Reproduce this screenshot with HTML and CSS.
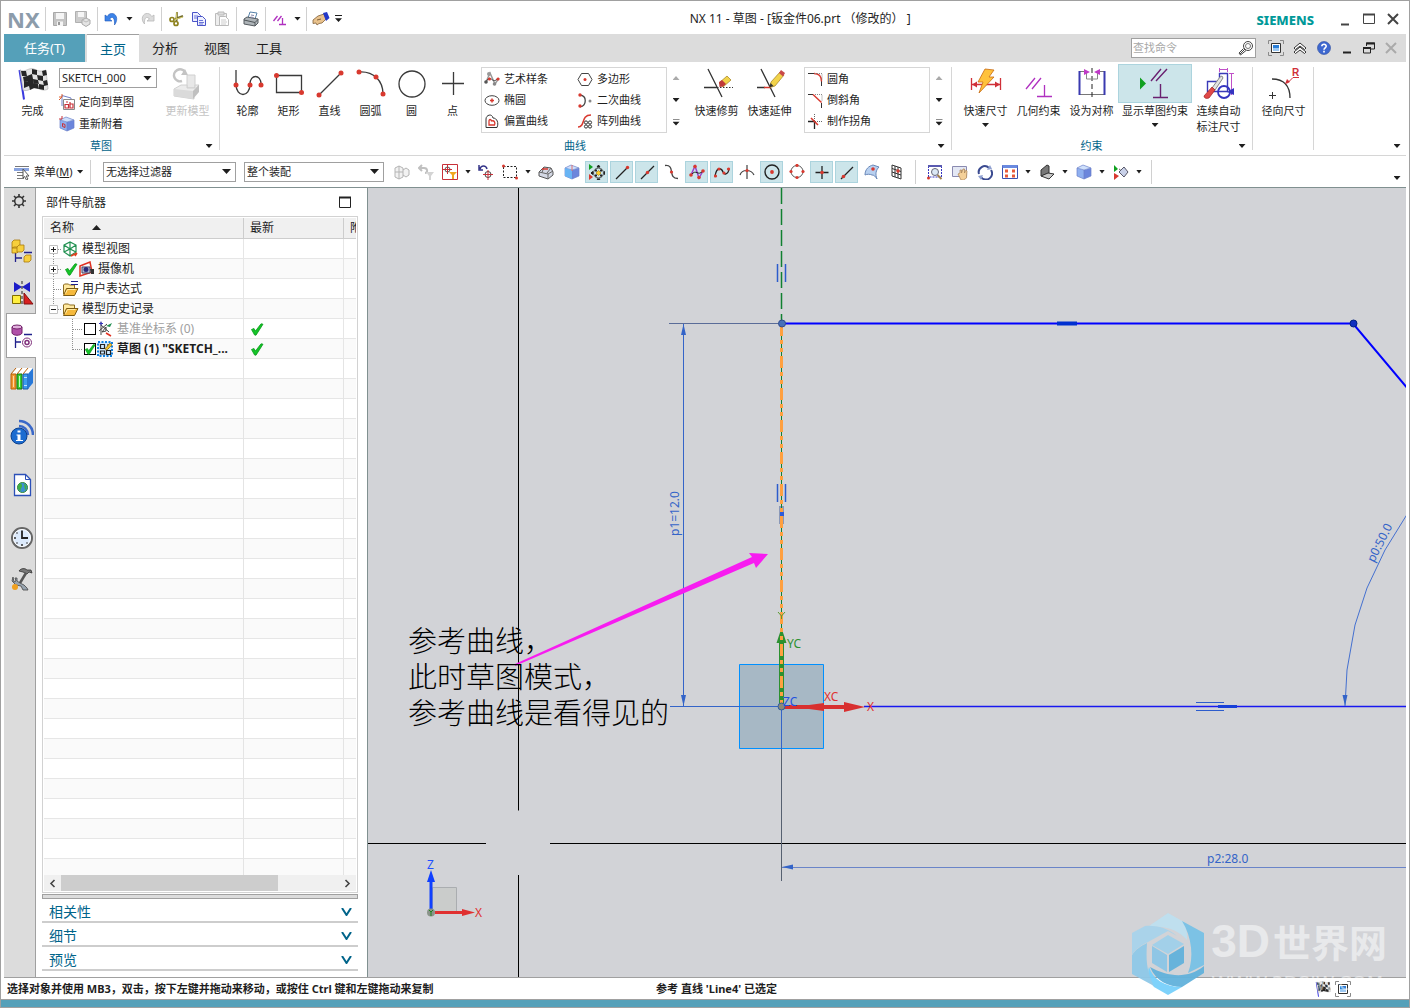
FILE: index.html
```html
<!DOCTYPE html>
<html lang="zh-CN">
<head>
<meta charset="utf-8">
<title>NX 11 - 草图 - [钣金件06.prt （修改的） ]</title>
<link rel="stylesheet" href="styles.css">
</head>
<body>
<svg class="defs" aria-hidden="true">
  <symbol id="tick" viewBox="0 0 14 14"><path d="M1.500 7.500 4 6.500l1.500 2.500L11 1.800l2 .4L6 13.200 4.600 13z" fill="#14c428" stroke="#0b9a1c" stroke-width=".8"/></symbol>
  <symbol id="flag" viewBox="0 0 32 32"><path d="M2.500 2 7 31.500" stroke="#3a3ae0" stroke-width="2"/><path d="M3 2c5 3 9-3 14-1 4 2 7 3 12 1l2 19c-5 3-9-1-13-1-5 0-7 4-12 2z" fill="#e4e4e4" stroke="#aaa" stroke-width=".6"/><path d="M4 3h5l1 5H5zM15 1l5 1v5l-5-1zM25 3l4-1 1 5-4 1zM10 8l5-2 1 5-5 2zM20 7l6 1v5l-5-1zM6 9l4-1 1 5-4 1zM16 11l5 1 1 4-5-1zM26 13l4-1 1 5-4 1zM11 13l5-2 1 5-5 2zM7 14l5-1v5l-5 2zM17 15l4 1 1 5-5-1zM22 16l5 1v5l-5-1zM12 18l5-2v4l-4 2z" fill="#262626"/></symbol>
  <symbol id="fit" viewBox="0 0 16 16"><path d="M.5 4V.5H4M12 .5h3.500V4M15.500 12v3.500H12M4 15.500H.5V12" fill="none" stroke="#8a8a8a"/><path d="M3.500 3.500h9v9h-9z" fill="#fff" stroke="#333"/><path d="M5 5h6v6H5z" fill="#2b7fd8"/><path d="M5 8h6v3H5z" fill="#9cc8f2"/></symbol>
  <symbol id="folder" viewBox="0 0 16 16"><path d="M1 13V4l1-1h4l1 1h5v3" fill="#ffe9a0" stroke="#8a6a20"/><path d="M1 14.500 4 7.500h11.500L12 14.500z" fill="#f5b93c" stroke="#7b5a12"/><path d="M3 12.500 5 8.500h8" fill="none" stroke="#ffe9a0"/></symbol>
  <symbol id="cube" viewBox="0 0 16 16"><path d="m1 4 7 2v9l-7-3z" fill="#8fb0f0"/><path d="m8 6 7-2v8l-7 3z" fill="#6c86dc"/><path d="m1 4 6-3 8 3-7 2z" fill="#cfe0fb"/><path d="m1 4 6-3 8 3v8l-7 3-7-3zM1 4l7 2 7-2M8 6v9" fill="none" stroke="#6a7fc8" stroke-width=".7"/></symbol>
</svg>

<header class="titlebar">
  <div class="quick">
    <span class="nx">NX</span><i class="sep"></i>
    <button class="q" aria-label="保存"><svg width="16" height="16"><path d="M1.500 1.500h13v13h-13z" fill="#c4c4c4" stroke="#a8a8a8"/><path d="M4 2h8v6H4zM5 10.500h6V15H5z" fill="#f5f5f5"/><path d="M6 11h2v3H6z" fill="#999"/></svg></button>
    <button class="q" aria-label="另存为"><svg width="16" height="16"><path d="M.5.500h11v11H.5z" fill="#ccc" stroke="#b0b0b0"/><path d="M3 1h6v5H3z" fill="#f5f5f5"/><path d="m7 9 4-2 4 2v4l-4 2.500L7 13z" fill="#e4e4e4" stroke="#aaa"/><path d="m7 9 4 2 4-2" fill="none" stroke="#bbb"/></svg></button>
    <i class="sep"></i>
    <button class="q" aria-label="撤消"><svg width="16" height="16"><path d="M1 4v6h7L5.500 8C8 5 11 6 10.500 14 15 8 12 2 7.500 2.500 5.500 2.500 4 4 3.200 5.500z" fill="#3c83e8" stroke="#1d55b8" stroke-width=".6"/></svg></button>
    <button class="q drop" aria-label="撤消列表"><i class="caret"></i></button>
    <button class="q" aria-label="重做"><svg width="16" height="16"><path d="M15 4v6H8l2.500-2C8 5 5 6 5.500 13 1 8 4 2 8.500 2.500c2 0 3.500 1.500 4.300 3z" fill="#dcdcdc" stroke="#b8b8b8" stroke-width=".8"/></svg></button>
    <i class="sep"></i>
    <button class="q" aria-label="剪切"><svg width="16" height="16"><path d="M8.500 10 9 1M7 8l8-3" stroke="#6f6a30" stroke-width="2"/><path d="m8 9 1-8M7 8.500 15 6" stroke="#d8cf70"/><circle cx="4" cy="8.500" r="2" fill="none" stroke="#8f8320" stroke-width="1.700"/><circle cx="8" cy="12.500" r="2" fill="none" stroke="#8f8320" stroke-width="1.700"/></svg></button>
    <button class="q" aria-label="复制"><svg width="16" height="16"><g fill="#eef0ff" stroke="#4a55c8"><path d="M1.500 1.500h5l3 3v6h-8z"/><path d="M6.500 5.500h5l3 3v6h-8z"/></g><path d="M3 5h4M3 7h3M8 9.500h4M8 11.500h5M8 13h4" stroke="#6c76d8"/></svg></button>
    <button class="q" aria-label="粘贴"><svg width="16" height="16"><path d="M1.500 2.500h11v12h-11z" fill="#eee" stroke="#bbb"/><path d="M4 1h6v3H4z" fill="#ddd" stroke="#bbb"/><path d="M5.500 5.500h6l3 3v6h-9z" fill="#fff" stroke="#bbb"/><path d="M7 9h5M7 11h6M7 13h5" stroke="#ccc"/></svg></button>
    <i class="sep"></i>
    <button class="q" aria-label="打印"><svg width="16" height="16"><path d="m5 7 2-6 7 1-2 6z" fill="#fff" stroke="#5580a8"/><path d="m1 8 3-2 11 2v4l-3 3-11-2z" fill="#aeb4b8" stroke="#555b60"/><path d="m1 9 11 2.500V15M12 11.500l3-3" fill="none" stroke="#50565a"/><path d="m8 4 3 .5M7.500 6l3 .5" stroke="#88a"/></svg></button>
    <i class="sep"></i>
    <button class="q" aria-label="几何约束"><svg width="16" height="16"><path d="m1.500 10 4-5M5.500 10l4-5M7 13.500h7M10.500 13.500V7" stroke="#b030c0" stroke-width="1.300" fill="none"/></svg></button>
    <button class="q drop" aria-label="约束列表"><i class="caret"></i></button>
    <i class="sep"></i>
    <button class="q" aria-label="触摸模式"><svg width="18" height="16"><path d="m1 9 5-4 6-2 2 5-4 4-3 .5-2 1.500-1-2-3 .5z" fill="#e9c28c" stroke="#80603a" stroke-width=".8"/><path d="m11 2 4-1 2.500 6-3.500 3z" fill="#2438c8"/><path d="m5 9 4-1" stroke="#80603a"/></svg></button>
    <button class="q drop" aria-label="更多"><i class="caret barred"></i></button>
  </div>
  <h1 class="doc">NX 11 - 草图 - [钣金件06.prt （修改的） ]</h1>
  <span class="brand">SIEMENS</span>
  <div class="win">
    <button aria-label="最小化"><svg width="14" height="14"><path d="M3 12.500h8" stroke="#444" stroke-width="2"/></svg></button>
    <button aria-label="最大化"><svg width="14" height="14"><path d="M1.500 2.500h11v9h-11z" fill="none" stroke="#444"/><path d="M1 2.500h12" stroke="#444" stroke-width="2"/></svg></button>
    <button aria-label="关闭"><svg width="14" height="14"><path d="m2 2 10 10M12 2 2 12" stroke="#444" stroke-width="2"/></svg></button>
  </div>
</header>

<nav class="tabs">
  <button class="tab file">任务(T)</button>
  <button class="tab on">主页</button>
  <button class="tab">分析</button>
  <button class="tab">视图</button>
  <button class="tab">工具</button>
  <label class="search"><input type="text" placeholder="查找命令" aria-label="查找命令"><svg width="16" height="16"><circle cx="10" cy="6" r="4.500" fill="#fff" stroke="#444"/><circle cx="10" cy="6" r="2.500" fill="none" stroke="#777"/><path d="m7 9-5 5M5.500 8.500 1 13l1.500 2L8 10.500" stroke="#444" fill="none"/></svg></label>
  <div class="tabtools">
    <button aria-label="全屏"><svg width="16" height="16"><use href="#fit"/></svg></button>
    <button aria-label="最小化功能区"><svg width="16" height="16"><path d="m2 8 6-5 6 5-1.500 1.500L8 6 3.500 9.500zM2 12l6-5 6 5-1.500 1.500L8 10l-4.500 3.500z" fill="#fff" stroke="#333"/></svg></button>
    <button aria-label="帮助"><svg width="14" height="14"><circle cx="7" cy="7" r="6.500" fill="#3e68d0" stroke="#2a4ba0" stroke-width=".6"/><path d="M4.800 5.300C5 2.600 9.300 2.700 9.200 5.200 9.100 6.800 7 6.800 7 8.700M7 9.800v1.600" fill="none" stroke="#fff" stroke-width="1.600"/></svg></button>
  </div>
  <div class="win small">
    <button aria-label="最小化文档"><svg width="14" height="14"><path d="M3 11.500h8" stroke="#222" stroke-width="2"/></svg></button>
    <button aria-label="还原文档"><svg width="14" height="14"><path d="M4.500 5V2h8v6H9M4 2.500h9M1.500 12V7h7v5z" fill="none" stroke="#222"/><path d="M1 7h8M4 2.500h9" stroke="#222" stroke-width="2"/></svg></button>
    <button aria-label="关闭文档"><svg width="14" height="14"><path d="m2 2 10 10M12 2 2 12" stroke="#aaa" stroke-width="2"/></svg></button>
  </div>
</nav>

<section class="ribbon">
  <div class="group g1">
    <div class="items">
      <button class="big"><span class="ic"><svg width="32" height="32"><use href="#flag"/></svg></span>完成</button>
      <div class="stack">
        <span class="pick"><select aria-label="草图名"><option>SKETCH_000</option></select><i class="caret wide"></i></span>
        <button class="line"><svg width="16" height="16"><path d="M3 1.500 12 4v2M3 1.500V12" fill="none" stroke="#7080c8"/><path d="M4.500 5.500h11v10h-11z" fill="#fff" stroke="#888"/><path d="M6 10.500h3.500V14H6zM11 8v6h3v-4h-3M7 8h2" fill="none" stroke="#c83038" stroke-width="1.200"/><path d="M0 3h3V0M0 6l3-3" stroke="#e06030" fill="none"/></svg>定向到草图</button>
        <button class="line"><svg width="16" height="16"><use href="#cube"/><path d="M3.500 7.500 6 8.500v3L3.500 10.500zM0 3h3V0" fill="none" stroke="#c83038"/></svg>重新附着</button>
      </div>
      <button class="big" disabled><span class="ic"><svg width="32" height="32"><path d="M10 13A6 6 0 1 1 13 4" fill="none" stroke="#c4c4c4" stroke-width="2.500"/><path d="m13 1 3 6-7 0z" fill="#c4c4c4"/><path d="M15 7h8v13h-8z" fill="#e8e8e8" stroke="#d0d0d0"/><path d="m2 21 7-4h6v3h8v-3h4l-5 6v8L2 28z" fill="#ececec" stroke="#d0d0d0"/><path d="m21 23 6-6v7l-6 7z" fill="#c0c0c0"/><path d="m2 21 19 2v8L2 28z" fill="#dadada"/></svg></span>更新模型</button>
    </div>
    <footer><span>草图</span><button class="more" aria-label="草图选项"><i class="caret"></i></button></footer>
  </div>

  <div class="group g2">
    <div class="items">
      <button class="tool"><span class="ic"><svg width="32" height="32"><path d="M4 2v14c0 14 14 14 14 0 0-10 11-10 11 0v2" fill="none" stroke="#3a3a3a" stroke-width="1.300"/><g fill="#d8392f"><circle cx="4" cy="17" r="2.500"/><circle cx="18" cy="17" r="2.500"/><circle cx="29" cy="17" r="2.500"/></g></svg></span>轮廓</button>
      <button class="tool"><span class="ic"><svg width="32" height="32"><path d="M3.500 7.500h25v17h-25z" fill="none" stroke="#3a3a3a" stroke-width="1.300"/><g fill="#d8392f"><circle cx="3.500" cy="7.500" r="2.500"/><circle cx="28.500" cy="24.500" r="2.500"/></g></svg></span>矩形</button>
      <button class="tool"><span class="ic"><svg width="32" height="32"><path d="M5 27 27 5" stroke="#3a3a3a" stroke-width="1.300"/><g fill="#d8392f"><circle cx="5" cy="27" r="2.500"/><circle cx="27" cy="5" r="2.500"/></g></svg></span>直线</button>
      <button class="tool"><span class="ic"><svg width="32" height="32"><path d="M4 4c15-1 24 9 24 22" fill="none" stroke="#3a3a3a" stroke-width="1.300"/><g fill="#d8392f"><circle cx="4" cy="4" r="2.500"/><circle cx="21" cy="9" r="2.500"/><circle cx="28" cy="26" r="2.500"/></g></svg></span>圆弧</button>
      <button class="tool"><span class="ic"><svg width="32" height="32"><circle cx="16" cy="16" r="13" fill="none" stroke="#3a3a3a" stroke-width="1.300"/></svg></span>圆</button>
      <button class="tool"><span class="ic"><svg width="32" height="32"><path d="M16.500 4v23M5 15.500h22" stroke="#3a3a3a" stroke-width="1.300"/></svg></span>点</button>
      <div class="gallery two">
        <button class="line"><svg width="16" height="16"><path d="M2 11 6 2l5 11 4-6" fill="none" stroke="#999" stroke-width="1.500"/><path d="M2 11c5-10 6 4 12-4" fill="none" stroke="#444"/><circle cx="5" cy="3" r="2" fill="#999"/><circle cx="2" cy="11" r="1.800" fill="#555"/><circle cx="10.500" cy="13" r="1.800" fill="#888"/><circle cx="5.500" cy="8" r="1.600" fill="#d8392f"/><circle cx="14" cy="8" r="1.600" fill="#d8392f"/></svg>艺术样条</button>
        <button class="line"><svg width="16" height="16"><path d="m4.500 2.500h7l3.500 6-3.500 6h-7L1 8.500z" fill="none" stroke="#444"/><circle cx="8" cy="8.500" r="1.500" fill="#d8392f"/></svg>多边形</button>
        <button class="line"><svg width="16" height="16"><ellipse cx="8" cy="8.500" rx="7" ry="4.800" fill="none" stroke="#444"/><path d="M8 6.500v4M6 8.500h4" stroke="#d8392f" stroke-width="1.500"/></svg>椭圆</button>
        <button class="line"><svg width="16" height="16"><path d="M3 3c7 1 7 10 0 12" fill="none" stroke="#444" stroke-width="1.300"/><g fill="#d8392f"><circle cx="3" cy="3" r="1.700"/><circle cx="3" cy="14" r="1.700"/></g><circle cx="13" cy="9" r="1.500" fill="#888"/></svg>二次曲线</button>
        <button class="line"><svg width="16" height="16"><path d="M2 14.500V6c0-4 6-6 7-1 4 0 6 5 4 9.500z" fill="none" stroke="#333"/><path d="M5 12V8c0-2 2-2 2.500 0 3-1 4 2 3 4z" fill="none" stroke="#d8392f" stroke-width="1.300"/></svg>偏置曲线</button>
        <button class="line"><svg width="16" height="16"><path d="M1 14c8 0 2-12 13-12" fill="none" stroke="#d8392f" stroke-width="1.500"/><g fill="#fff" stroke="#333"><circle cx="9" cy="9.500" r="1.600"/><circle cx="13" cy="9.500" r="1.600"/><circle cx="9" cy="13.500" r="1.600"/><circle cx="13" cy="13.500" r="1.600"/></g></svg>阵列曲线</button>
      </div>
      <div class="scroll"><button aria-label="上一行"><i class="caret up"></i></button><button aria-label="下一行"><i class="caret"></i></button><button aria-label="全部曲线"><i class="caret barred"></i></button></div>
      <button class="big after"><span class="ic"><svg width="32" height="32"><path d="m7 1 14 28M3 19.500h13" stroke="#333" stroke-width="1.300"/><path d="M16 19.500h16" stroke="#333" stroke-dasharray="1.500 1.500"/><path d="m18 15 8-7 4 4-8 7z" fill="#f2d34a" stroke="#a08020" stroke-width=".7"/><path d="m18 14 3-2 4 4-3 2.500-3.500.5z" fill="#c03a3a"/></svg></span>快速修剪</button>
      <button class="big"><span class="ic"><svg width="32" height="32"><path d="m7 1 14 28M3 19.500h8" stroke="#333" stroke-width="1.300"/><path d="M10 19.500h7" stroke="#d8392f" stroke-width="1.500"/><path d="m17 14 9-10 4 3-9 11-5 1.500z" fill="#f2d34a" stroke="#a08020" stroke-width=".7"/><path d="m25 5 2-3 4 3-2 3.500z" fill="#c84a4a"/><path d="m16.500 15-1 4.500 4-1.500z" fill="#333"/></svg></span>快速延伸</button>
      <div class="gallery one">
        <button class="line"><svg width="16" height="16"><path d="M1 2.500h6M14.500 10v5" stroke="#333"/><path d="M7 2.500c5 0 7.500 3 7.500 8" fill="none" stroke="#d8392f" stroke-width="1.400"/><path d="M8 2.500h7V9" fill="none" stroke="#888" stroke-dasharray="1 1"/></svg>圆角</button>
        <button class="line"><svg width="16" height="16"><path d="M1 2.500h5M14.500 11v5" stroke="#333"/><path d="m6 2.500 8.500 8" fill="none" stroke="#d8392f" stroke-width="1.400"/><path d="M8 2.500h7V9" fill="none" stroke="#888" stroke-dasharray="1 1"/></svg>倒斜角</button>
        <button class="line"><svg width="16" height="16"><path d="M1 8.500h6M7.500 9v7" stroke="#222" stroke-width="1.300"/><path d="M8 8.500h7M7.500 1v7" stroke="#666" stroke-dasharray="1 1"/><path d="m4 5 7 7" stroke="#d8392f" stroke-width="1.600"/></svg>制作拐角</button>
      </div>
      <div class="scroll"><button aria-label="上一行"><i class="caret up"></i></button><button aria-label="下一行"><i class="caret"></i></button><button aria-label="全部编辑"><i class="caret barred"></i></button></div>
    </div>
    <footer><span>曲线</span><button class="more" aria-label="曲线选项"><i class="caret"></i></button></footer>
  </div>

  <div class="group g3">
    <div class="items">
      <button class="big"><span class="ic"><svg width="32" height="32"><path d="M1.500 10v12M30.500 10v12M2 16.500h28" stroke="#d03038" stroke-width="1.300"/><path d="m2 16.500 5-3v6zM30 16.500l-5-3v6z" fill="#d03038"/><path d="m15 1 9 1-5 7h5L9 25l4-11H8z" fill="#ffc23c" stroke="#c86a10" stroke-width=".8"/></svg></span>快速尺寸<i class="caret"></i></button>
      <button class="big"><span class="ic"><svg width="32" height="32"><path d="m3 21 9-11M9 21l9-11M14 28.500h15M21.500 28V17" stroke="#b030c0" stroke-width="1.300" fill="none"/></svg></span>几何约束</button>
      <button class="big"><span class="ic"><svg width="32" height="32"><path d="M10 3.500H3.500v23h25v-23H22" fill="none" stroke="#777"/><path d="M3.500 3v24M28.500 3v24" stroke="#3a3ab0" stroke-width="2"/><path d="M16 0v30" stroke="#222" stroke-dasharray="5 3"/><path d="M10.500 5v6h11V5" fill="none" stroke="#888"/><path d="m8 1 6 3-6 3zM24 1l-6 3 6 3z" fill="#c03ac8"/></svg></span>设为对称</button>
      <button class="big lit"><span class="ic"><svg width="32" height="32"><path d="M1 9.500v12l6-6z" fill="#10a020"/><path d="m12 13 10-12M17 13 28 1M14 29.500h15M21.500 29V16" stroke="#6a2070" stroke-width="1.400" fill="none"/></svg></span>显示草图约束<i class="caret"></i></button>
      <button class="big"><span class="ic"><svg width="32" height="32"><path d="M4.500 13.500h12v-8h8v18h-20z" fill="none" stroke="#3a3ab8" stroke-width="1.400"/><path d="M16 1.500h9M16.500 0v4M24.500 0v4M26 5.500h5M28.500 5v22" stroke="#c050c8"/><circle cx="21" cy="24" r="6" fill="none" stroke="#3434c0" stroke-width="1.800"/><path d="m24 24 7-4v7z" fill="#3434c0"/><path d="m9 20 8-11 2-1 1 2-8 12z" fill="#e4e4e4" stroke="#888"/><path d="m1 28 8-9 3 3-6 8c-3 1-5 0-5-2z" fill="#e04848" stroke="#a02020" stroke-width=".7"/></svg></span>连续自动<br>标注尺寸</button>
    </div>
    <footer><span>约束</span><button class="more" aria-label="约束选项"><i class="caret"></i></button></footer>
  </div>

  <div class="group g4">
    <div class="items">
      <button class="big"><span class="ic"><svg width="32" height="32"><path d="M4 11c12 0 18 7 18 19" fill="none" stroke="#333" stroke-width="1.300"/><path d="M1 27.500h7M4.500 24v7" stroke="#333"/><path d="M31 9.500h-6l-6 6" fill="none" stroke="#d03038"/><path d="m17 16 2-5 3 3z" fill="#d03038"/><text x="24" y="8" class="rmark">R</text></svg></span>径向尺寸</button>
    </div>
  </div>
  <button class="more end" aria-label="功能区选项"><i class="caret"></i></button>
</section>

<section class="bar">
  <button class="menu"><svg width="16" height="16"><path d="M1 2.500h14M3 8.500h8M3 11.500h7M3 14.500h7" stroke="#777"/><path d="M0 4h15v3H0z" fill="#8aa4e0"/><path d="m9 5 6 7h-3l2 3-1.500 1-2-3.500L9 14z" fill="#fff" stroke="#555"/></svg><span>菜单(<u>M</u>)</span><i class="caret"></i></button>
  <i class="sep tall"></i>
  <span class="pick f1"><select aria-label="类型过滤器"><option>无选择过滤器</option></select><i class="caret wide"></i></span>
  <span class="pick f2"><select aria-label="选择范围"><option>整个装配</option></select><i class="caret wide"></i></span>
  <div class="set narrow">
    <button aria-label="约束装配"><svg width="16" height="16"><path d="m1 4 4-2 4 2v9l-4 2-4-2zM1 8h8M5 2v13M9 6l3-2 3 2v5l-3 2-3-2" fill="#f2f2f2" stroke="#b4b4b4"/></svg></button>
    <button aria-label="重置过滤器"><svg width="16" height="16"><path d="M1 4h5c4 0 4 5 1 5M4 1 1 4l3 3" fill="none" stroke="#c0c0c0" stroke-width="2"/><path d="M8 8h8l-3 4v4h-2v-4z" fill="#d4d4d4"/></svg></button>
    <button aria-label="常规选择过滤器"><svg width="16" height="16"><path d="M.5.500h15v15H.5z" fill="#fff" stroke="#c83038"/><circle cx="5.500" cy="5.500" r="2.500" fill="none" stroke="#555"/><path d="M5.500 1v9M1 5.500h9" stroke="#c83038"/><path d="M7 8h8l-3 3v4h-2v-4z" fill="#f0a820"/></svg></button>
    <button class="drop" aria-label="过滤器列表"><i class="caret"></i></button>
    <button aria-label="返回选择"><svg width="16" height="16"><path d="M2 5c1-4 6-4 7 0M1 1v5h4" fill="none" stroke="#343488" stroke-width="1.500"/><circle cx="10" cy="10.500" r="3" fill="none" stroke="#444"/><path d="M10 6v10M5 10.500h10" stroke="#c83038"/></svg></button>
    <button aria-label="矩形选择"><svg width="16" height="16"><path d="M1.500 2.500h13v11h-13z" fill="none" stroke="#222" stroke-dasharray="2 1.500"/><circle cx="1.500" cy="2" r="1.500" fill="#d8392f"/><circle cx="14.500" cy="14" r="1.500" fill="#d8392f"/></svg></button>
    <button class="drop" aria-label="选择方式"><i class="caret"></i></button>
    <button aria-label="高亮隐藏边"><svg width="16" height="16"><path d="m1 8 5-5 7 1 2 4v3l-5 4-9-3z" fill="#d4d8e4" stroke="#555"/><path d="m1 8 9 2v5M10 10l5-3M6 3 4 8.500M13 4l-4 5" fill="none" stroke="#666"/><path d="m4 5 6 0" stroke="#d8392f" stroke-width="1.500"/></svg></button>
  </div>
  <div class="set">
    <button aria-label="着色"><svg width="16" height="16"><use href="#cube"/><path d="M1 4v8l7 3V6z" fill="#68b4f4"/><path d="M8 1v6" stroke="#e07070"/></svg></button>
    <button class="lit" aria-label="启用捕捉点"><svg width="16" height="16"><path d="M0 0v6l4-3z" fill="#10a020"/><path d="M0 10v6l4-3z" fill="#d8392f"/><circle cx="9.500" cy="9" r="5" fill="none" stroke="#444"/><path d="m8 3 1.500-2L11 3zM8 15l1.500 2 1.500-2zM3.500 7.500 2 9l1.500 1.500zM15.500 7.500 17 9l-1.500 1.500z" fill="#222" stroke="#222"/><path d="M6 5.500h2v2H6zM11 5.500h2v2h-2zM6 10.500h2v2H6zM11 10.500h2v2h-2z" fill="#222"/><path d="m9.500 6.500 2.500 2.500-2.500 2.500L7 9z" fill="#ffd030" stroke="#a07800" stroke-width=".6"/></svg></button>
    <button class="lit" aria-label="端点"><svg width="16" height="16"><path d="M2 15 13 4" stroke="#222" stroke-width="1.300"/><circle cx="13.500" cy="3.500" r="1.700" fill="#d8392f"/></svg></button>
    <button class="lit" aria-label="中点"><svg width="16" height="16"><path d="M2 15 15 2" stroke="#222" stroke-width="1.300"/><circle cx="8.500" cy="8.500" r="1.700" fill="#d8392f"/></svg></button>
    <button aria-label="控制点"><svg width="16" height="16"><path d="M1 1.500c11-1 2 13 13 13" fill="none" stroke="#444" stroke-width="1.300"/><circle cx="7.500" cy="8" r="1.600" fill="#d8392f"/></svg></button>
    <button class="lit" aria-label="极点"><svg width="16" height="16"><path d="M2 11 6 2l4 12 4-7" fill="none" stroke="#9a40c8" stroke-width="1.500"/><path d="M2 11c6-7 6 2 12-4" fill="none" stroke="#222"/><g fill="#d8392f"><circle cx="2" cy="11" r="1.800"/><circle cx="6" cy="2.500" r="1.800"/><circle cx="10" cy="13.500" r="1.800"/><circle cx="14" cy="7" r="1.800"/></g></svg></button>
    <button class="lit" aria-label="定义点"><svg width="16" height="16"><path d="M1 12C3 1 8 5 9 8s5 3 6-3" fill="none" stroke="#222" stroke-width="1.300"/><g fill="#d8392f"><circle cx="1.500" cy="12" r="1.600"/><circle cx="5" cy="5" r="1.600"/><circle cx="10" cy="9" r="1.600"/><circle cx="14.500" cy="5" r="1.600"/></g></svg></button>
    <button aria-label="交点"><svg width="16" height="16"><path d="M1 11c2-6 11-6 14 0M8 1v14" fill="none" stroke="#444" stroke-width="1.200"/><circle cx="8" cy="6.500" r="1.600" fill="#d8392f"/></svg></button>
    <button class="lit" aria-label="圆弧中心"><svg width="16" height="16"><circle cx="8" cy="8" r="7" fill="none" stroke="#222" stroke-width="1.400"/><circle cx="8" cy="8" r="1.900" fill="#d8392f"/></svg></button>
    <button aria-label="象限点"><svg width="16" height="16"><circle cx="8" cy="7.500" r="6" fill="none" stroke="#555"/><g fill="#d8392f"><circle cx="8" cy="1.500" r="1.600"/><circle cx="8" cy="13.500" r="1.600"/><circle cx="2" cy="7.500" r="1.600"/><circle cx="14" cy="7.500" r="1.600"/></g></svg></button>
    <button class="lit" aria-label="现有点"><svg width="16" height="16"><path d="M8 2v13M1.500 8.500h13" stroke="#222" stroke-width="1.300"/><circle cx="8" cy="8.500" r="1.800" fill="#d8392f"/></svg></button>
    <button class="lit" aria-label="曲线上的点"><svg width="16" height="16"><path d="M2 15 14 3" stroke="#222" stroke-width="1.300"/><circle cx="4.500" cy="12.500" r="1.800" fill="#d8392f"/></svg></button>
    <button aria-label="面上的点"><svg width="16" height="16"><path d="M1 11C1 5 5 2 9 1l6 2c-3 3-4 7-2 12-2-3-3-4-5-4-2-1-5-1-7 0z" fill="#b8d0f0" stroke="#6a88b8"/><circle cx="9" cy="5" r="1.800" fill="#d8392f"/></svg></button>
    <button aria-label="栅格点"><svg width="16" height="16"><path d="m3 1 9 3v11l-9-3zM6 2v11M9 3v11M3 4.500l9 3M3 8l9 3" fill="none" stroke="#333"/><circle cx="9" cy="7" r="1.700" fill="#d8392f"/></svg></button>
  </div>
  <i class="sep tall"></i>
  <div class="set">
    <button aria-label="缩放"><svg width="16" height="16"><path d="M1 2.500h14M1.500 2v11h13V2" fill="none" stroke="#3434c0" stroke-dasharray="2 1"/><path d="M1 2h14" stroke="#5a5ab0" stroke-width="2"/><circle cx="8" cy="8" r="3.500" fill="#dbe8f4" stroke="#667"/><path d="m10.500 11 4 4" stroke="#a08050" stroke-width="2"/><circle cx="1.500" cy="14" r="1.500" fill="#d8392f"/></svg></button>
    <button aria-label="平移"><svg width="16" height="16"><path d="M.5 2.500h14v10H.5z" fill="#e4e8f4" stroke="#8a8ab0"/><path d="m6 10 2-1V6h1.500v3L11 5h1.500v4L14 6l1 1-.5 7-3 2H9z" fill="#f4d098" stroke="#a88050" stroke-width=".7"/></svg></button>
    <button aria-label="旋转"><svg width="16" height="16"><path d="M2 10A6 6 0 0 1 12 4M14 6A6 6 0 0 1 4 13" fill="none" stroke="#3a4a90" stroke-width="2"/><path d="m10 6 5-1-2-4zM6 11l-5 1 3 4z" fill="#8fa0d0"/></svg></button>
    <button aria-label="适合窗口"><svg width="16" height="16"><path d="M.5 1.500h15v13H.5z" fill="#fff" stroke="#3a50b0"/><path d="M.5 1h15v3H.5z" fill="#6a8ae0"/><path d="M3 5.500h3v3H3zM10 5.500h3v3h-3zM3 10.500h3v3H3zM10 10.500h3v3h-3z" fill="#e85a38"/></svg></button>
    <button class="drop" aria-label="适合列表"><i class="caret"></i></button>
    <button aria-label="定向视图"><svg width="16" height="16"><path d="m2 6 6-5 2 1v7l-8 3z" fill="#777" stroke="#333"/><path d="m2 12 7-3 6 1-5 5z" fill="#c8c8c8" stroke="#333"/></svg></button>
    <button class="drop" aria-label="视图列表"><i class="caret"></i></button>
    <button aria-label="带边着色"><svg width="16" height="16"><use href="#cube"/></svg></button>
    <button class="drop" aria-label="渲染样式"><i class="caret"></i></button>
    <button aria-label="编辑截面"><svg width="16" height="16"><path d="M1 1v7l4-3z" fill="#10a020"/><path d="M1 9v7l5-4z" fill="#d8392f"/><path d="M6 5c2 0 2 6 4 6" fill="none" stroke="#555"/><path d="m6 8 5-5 4 5-4 5z" fill="#c8d0e8" stroke="#556"/></svg></button>
    <button class="drop" aria-label="截面列表"><i class="caret"></i></button>
  </div>
  <i class="sep tall"></i>
  <button class="more end" aria-label="工具条选项"><i class="caret"></i></button>
</section>

<main class="work">
  <nav class="rail" aria-label="资源条">
    <button class="gear" aria-label="设置"><svg width="14" height="14"><circle cx="7" cy="7" r="4.300" fill="none" stroke="#333" stroke-width="1.500"/><path d="M7 0v3M7 11v3M0 7h3M11 7h3M2 2l2 2M10 10l2 2M12 2l-2 2M4 10l-2 2" stroke="#333" stroke-width="1.600"/></svg></button>
    <button aria-label="装配导航器"><svg width="24" height="26"><path d="M5.500 14v9M6 19h6M14 13.500h8" stroke="#20208c" stroke-width="1.300"/><g fill="#f7cf3c" stroke="#a8780c" stroke-width=".8"><path d="m2 3 2-2h6v6L8 9H2zM2 9l2-1h5v4l-2 2H2z"/><path d="m7 8 2-2h5v5l-2 2H7zM14 18l2-2h5v5l-2 2h-5z"/></g></svg></button>
    <button aria-label="约束导航器"><svg width="24" height="26"><path d="M4 2v10l8-5zM20 2v10l-8-5z" fill="#1c1cc8"/><path d="M12 1v24" stroke="#222" stroke-dasharray="3 2"/><path d="M2.500 15.500h8v8h-8z" fill="#ffef40" stroke="#806c00"/><path d="M14 13v11h9z" fill="#d82020" stroke="#801010"/></svg></button>
    <button class="on" aria-label="部件导航器"><svg width="24" height="26"><path d="M2 4v6c1 3 9 3 10 0V4z" fill="#b050a8" stroke="#702068"/><ellipse cx="7" cy="4" rx="5" ry="2" fill="#e0b0dc" stroke="#702068"/><path d="M14 11.500h8M5.500 14v11M6 19h5" stroke="#20208c" stroke-width="1.300"/><circle cx="17" cy="19.500" r="4.500" fill="#fff" stroke="#80307c"/><circle cx="17" cy="19.500" r="2" fill="none" stroke="#80307c" stroke-width="1.500"/></svg></button>
    <button aria-label="重用库"><svg width="24" height="24"><path d="M1 7 6 1h17v15l-5 6H1z" fill="#fff"/><path d="M1 7h5v15H1z" fill="#f09830" stroke="#b86008"/><path d="M7 7h5v15H7z" fill="#38d030" stroke="#107010"/><path d="M13 7h5v15h-5z" fill="#3c9cf0" stroke="#1858a8"/><path d="m18 7 5-6v15l-5 6z" fill="#2878d8"/><path d="m1 7 5-6M7 7l5-6M13 7l5-6" stroke="#b86008"/><path d="M3.500 9v11" stroke="#ffd8a0"/><path d="M9.500 9v11" stroke="#c0ffc0"/><path d="M14 10.500h3M14 18.500h3" stroke="#c0e0ff"/></svg></button>
    <button class="gap" aria-label="HD3D 工具"><svg width="24" height="26"><path d="M9 2c8 0 14 6 14 14M9 7c5 0 9 4 9 9" fill="none" stroke="#3a68c8" stroke-width="2.500"/><circle cx="9" cy="17" r="8" fill="#1c6cd0" stroke="#0c408c"/><path d="M7.500 11.500h3v2h-3zM6.500 15.500h4V21H13v1H6v-1h1.500v-4.500h-1z" fill="#fff"/></svg></button>
    <button class="gap" aria-label="Web 浏览器"><svg width="24" height="24"><path d="M4.500 1.500h11l5 5v16h-16z" fill="#fff" stroke="#2c50b8" stroke-width="1.300"/><path d="M15.500 1.500v5h5" fill="none" stroke="#2c50b8"/><circle cx="12.500" cy="14.500" r="5" fill="#3c90d0" stroke="#308830"/><path d="M9 11c2-1 3 0 3 2s-2 2-1 5c-3-1-4-4-2-7zM14 11c3 1 3 5 1 6z" fill="#40b040"/></svg></button>
    <button class="gap" aria-label="历史记录"><svg width="24" height="24"><circle cx="12" cy="12" r="10" fill="#dceafc" stroke="#666" stroke-width="2"/><circle cx="12" cy="12" r="8.500" fill="none" stroke="#fff"/><path d="M12 4.500V12h6" fill="none" stroke="#222" stroke-width="1.800"/><g fill="#333"><circle cx="12" cy="19" r="1"/><circle cx="5" cy="12" r="1"/><circle cx="7" cy="7" r=".8"/><circle cx="17" cy="17" r=".8"/><circle cx="7" cy="17" r=".8"/></g></svg></button>
    <button aria-label="角色"><svg width="24" height="24"><path d="M9 4c2-3 6-3 8-1l4 0 1 3-3-1-2 2-4-2z" fill="#777" stroke="#333" stroke-width=".8"/><path d="m16 6-6 10" stroke="#555" stroke-width="2.500"/><path d="m3 10-1 4 4 4 5 1 2 4 5 0-1-2-3-3-4-2-3-2 0-3-2 0 1 3-2 1z" fill="#98a4b0" stroke="#444" stroke-width=".8"/><circle cx="5" cy="20" r="3" fill="#f0a020"/></svg></button>
  </nav>

  <aside class="panel">
    <div class="ptitle"><h2>部件导航器</h2><button aria-label="停靠"><svg width="13" height="13"><path d="M.5 1.500h11v10H.5z" fill="none" stroke="#222"/><path d="M0 1.500h12" stroke="#222" stroke-width="2"/></svg></button></div>
    <div class="box">
      <div class="grid">
        <table>
          <thead><tr><th class="c1">名称<svg class="sort" width="9" height="5"><path d="M0 5 4.500 0 9 5z" fill="#222"/></svg></th><th class="c2">最新</th><th class="c3">附</th></tr></thead>
          <tbody>
            <tr><td><div class="node"><svg width="18" height="20"><path d="M9.500 15v5M14 10.500h4" class="guide"/><path d="M5.500 6.500h8v8h-8z" class="pm"/><path d="M7 10.500h5M9.500 8v5" class="pl"/></svg><svg width="17" height="18"><path d="m2 5 6-3 6 3v7l-6 4-6-4zM2 5l6 4 6-4M8 9v7M8 2v7M2 12l6-3 6 3" fill="none" stroke="#209050" stroke-width="1.200"/><path d="m9 16 6-3M15 13l-2 3" stroke="#e04020" stroke-width="1.500"/></svg><span>模型视图</span></div></td><td></td><td></td></tr>
            <tr><td><div class="node"><svg width="18" height="20"><path d="M9.500 0v6M9.500 15v5M14 10.500h4" class="guide"/><path d="M5.500 6.500h8v8h-8z" class="pm"/><path d="M7 10.500h5M9.500 8v5" class="pl"/></svg><svg class="tk" width="14" height="14"><use href="#tick"/></svg><svg width="17" height="16"><path d="m2 5 10-4 2 10-12 4z" fill="none" stroke="#e03020" stroke-width="1.500"/><path d="M4 6h8v6H4z" fill="#b8c0d8" stroke="#404060"/><circle cx="8" cy="8.500" r="2.500" fill="#282878"/><path d="M12 8h4v5h-3z" fill="#333"/></svg><span>摄像机</span></div></td><td></td><td></td></tr>
            <tr><td><div class="node"><svg width="18" height="20"><path d="M9.500 0v20M10 10.500h8" class="guide"/></svg><svg width="17" height="16"><use href="#folder"/><path d="M9 .5h7M9 3.500h7" stroke="#20208c"/></svg><span>用户表达式</span></div></td><td></td><td></td></tr>
            <tr><td><div class="node"><svg width="18" height="20"><path d="M9.500 0v6M14 10.500h4" class="guide"/><path d="M5.500 6.500h8v8h-8z" class="pm"/><path d="M7 10.500h5" class="pl"/></svg><svg width="17" height="16"><use href="#folder"/></svg><span>模型历史记录</span></div></td><td></td><td></td></tr>
            <tr><td><div class="node"><svg width="38" height="20"><path d="M28.500 0v20M29 10.500h9" class="guide"/></svg><label class="cb"><input type="checkbox" aria-label="基准坐标系"></label><svg width="17" height="16"><path d="M4 1v13M4 4l8 7M2 10l8-7M5 11l4-1V6z" fill="none" stroke="#444"/><path d="m9 5 6-3-2 4z" fill="#209050"/><path d="m9 12 5 3" stroke="#e03020" stroke-width="1.500"/><path d="M2 2.500h4M4 .5v4" stroke="#3434c0"/></svg><span class="dim">基准坐标系 (0)</span></div></td><td><svg width="14" height="14"><use href="#tick"/></svg></td><td></td></tr>
            <tr><td><div class="node"><svg width="38" height="20"><path d="M28.500 0v11M29 10.500h9" class="guide"/></svg><label class="cb"><input type="checkbox" checked aria-label="草图 (1)"><svg width="12" height="12"><use href="#tick"/></svg></label><svg width="17" height="16"><path d="M1 1h14v14H1z" fill="#cfe8ff" stroke="#1080e0" stroke-width="2" stroke-dasharray="2 1.500"/><path d="M3.500 3.500h4v4h-4zM9.500 9.500h4v4h-4zM3.500 13v-3h4v3zM11 3v5" fill="none" stroke="#222" stroke-width="1.200"/><path d="m8 8 5-6 2 2-5 5z" fill="#f0c030" stroke="#806000" stroke-width=".6"/></svg><strong>草图 (1) "SKETCH_...</strong></div></td><td><svg width="14" height="14"><use href="#tick"/></svg></td><td></td></tr>
          </tbody>
        </table>
      </div>
      <div class="hbar"><button aria-label="向左滚动"><svg width="7" height="9"><path d="M5.500 1 2 4.500 5.500 8" fill="none" stroke="#444" stroke-width="1.600"/></svg></button><span class="track"><i class="thumb"></i></span><button aria-label="向右滚动"><svg width="7" height="9"><path d="M1.500 1 5 4.500 1.500 8" fill="none" stroke="#444" stroke-width="1.600"/></svg></button></div>
    </div>
    <div class="split"></div>
    <button class="fold">相关性<svg width="11" height="8"><path d="M1 0 5.500 7 10 0" fill="none" stroke="#00648a" stroke-width="2"/></svg></button>
    <button class="fold">细节<svg width="11" height="8"><path d="M1 0 5.500 7 10 0" fill="none" stroke="#00648a" stroke-width="2"/></svg></button>
    <button class="fold">预览<svg width="11" height="8"><path d="M1 0 5.500 7 10 0" fill="none" stroke="#00648a" stroke-width="2"/></svg></button>
  </aside>

  <section class="view" aria-label="图形窗口">
    <svg class="scene">
      <g transform="translate(-368 -188)" fill="none">
        <path d="M518.500 188v622.500M518.500 875v400M368 843.500h118M550 843.500h3000" stroke="#000"/>
        <path d="M781.500 188v136" stroke="#108030" stroke-width="1.500" stroke-dasharray="16 5"/>
        <path d="M777.500 264v18M785.500 264v18M777.500 484v18M785.500 484v18" stroke="#2c5ccc" stroke-width="1.500"/>
        <path d="M669 323.500h112" stroke="#5a6c98"/>
        <path d="M670 706.500h112M683.500 324v382" stroke="#3464c8"/>
        <path d="M781.500 749v132" stroke="#566070"/>
        <path d="m683.500 324-2.500 11h5zM683.500 706l-2.500-11h5z" fill="#3464c8"/>
        <path d="M782 867.500h2800" stroke="#6a84c8"/>
        <path d="m782 867 11-2.500v5z" fill="#3464c8"/>
        <path d="M739.500 664.500h84v84h-84z" fill="#7b9eb4" fill-opacity=".5" stroke="#0090ff"/>
        <path d="M739 706.500h42M781.500 707v42" stroke="#3464c8"/>
        <path d="M782 323.500h571l53 63 60 71" stroke="#00f" stroke-width="2"/>
        <path d="M1057 323.500h20" stroke="#0030d0" stroke-width="4"/>
        <path d="M864 706.500h2700" stroke="#1818f0" stroke-width="1.500"/>
        <path d="M1196 702.500h28M1196 710.500h28" stroke="#2c5ccc"/>
        <path d="M1218 706.500h19" stroke="#1840d8" stroke-width="3"/>
        <circle cx="1353.500" cy="323.500" r="3.500" fill="#1030c0" stroke="#002080"/>
        <path d="m1345 706 2-36 8-45 12-37 18-38 21-34 20-28" stroke="#4470d0"/>
        <path d="m1345 706-2.500-11h5z" fill="#3464c8"/>
        <path d="M779 506h5v18h-5z" fill="#8a98b8"/>
        <path d="M781.500 324v382" stroke="#108030"/>
        <path d="m781.500 628 5 15h-10zM779 643h5v62h-5z" fill="#2c9030"/>
        <path d="M781.500 324v382" stroke="#ffa040" stroke-width="3" stroke-dasharray="12 4 4 4 4 4"/>
        <path d="M780 512h4v4h-4z" fill="#2c5cdc"/>
        <path d="m778 612 3.500 4 3.500-4M781.500 616v3" stroke="#5a9a30"/>
        <path d="M784 705h25l15-2v2h20v-3l21 5-21 5v-3h-20v2l-15-2h-25z" fill="#d83030"/>
        <circle cx="782" cy="323.500" r="3.500" fill="#4870b8" stroke="#304c90"/>
        <circle cx="781.500" cy="706.500" r="3.500" fill="#8a8a78" stroke="#2c5ca0"/>
        <path d="m515 664 237-107-3-4 19 1-12 14-2-5-239 103z" fill="#f71cf0"/>
        <path d="M432.500 887.500h24v24h-24z" fill="#cacccb" stroke="#aaadb0"/>
        <path d="M429.500 879h3v30h-3z" fill="#1040ff"/><path d="m431 870-4 12h8z" fill="#1040ff"/>
        <path d="M435 911h27v-2l13 3.500-13 3.500v-2h-27z" fill="#e03030"/>
        <circle cx="431" cy="912.500" r="4" fill="#8a948a"/><path d="m429 910 2 2 2-2M431 912v4" stroke="#208020"/>
      </g>
      <g transform="translate(-368 -188)" class="lbl">
        <text x="787" y="648" fill="#2c9030">YC</text>
        <text x="783" y="706" fill="#2050e0">ZC</text>
        <text x="824" y="701" fill="#e03030">XC</text>
        <text x="867" y="711" fill="#e03030">X</text>
        <text x="427" y="869" fill="#2050ff">Z</text>
        <text x="475" y="917" fill="#e03030">X</text>
        <text transform="translate(679 536) rotate(-90)" fill="#3464c8">p1=12.0</text>
        <text transform="translate(1374 563) rotate(-63)" fill="#3464c8">p0:50.0</text>
        <text x="1207" y="863" fill="#3464c8">p2:28.0</text>
      </g>
    </svg>
    <p class="note">参考曲线，<br>此时草图模式，<br>参考曲线是看得见的</p>
  </section>
</main>

<footer class="status">
  <span>选择对象并使用 MB3，双击，按下左键并拖动来移动，或按住 Ctrl 键和左键拖动来复制</span>
  <span class="picked">参考 直线 'Line4' 已选定</span>
  <svg width="16" height="16"><use href="#flag"/></svg>
  <svg width="16" height="16"><use href="#fit"/></svg>
</footer>

<div class="mark">
  <svg width="72" height="82" viewBox="0 0 72 82">
    <path d="M14 15 36 0l16 9c3 5 3 12 3 18C46 16 30 11 14 15z" fill="#bfe0f0"/>
    <path d="M50 8 72 20v32L56 60C62 45 60 24 50 8z" fill="#78c2e6"/>
    <path d="M72 53v7L50 74C36 74 24 68 18 54c18 10 38 12 54-1z" fill="#62b2dc"/>
    <path d="M17 54c4 12 15 20 33 20L36 82 22 74C17 68 15 60 17 54z" fill="#78d0fb"/>
    <path d="M0 61V42c4-6 9-9 15-12-1 15-1 28 7 43z" fill="#8fc9e8"/>
    <path d="M0 20 13 13c13-1 24 3 32 10L36 18 16 29C9 32 4 36 0 42z" fill="#a8d4ec"/>
    <path d="m20 32 16-10 16 9-16 10z" fill="#a0d0ea"/>
    <path d="m20 33 15 9v17l-15-9z" fill="#8cc6e6"/>
    <path d="m37 42 15-9v17l-15 9z" fill="#62b2dc"/>
  </svg>
  <div><b><span>3D</span>世界网</b><small>WWW.3DSJW.COM</small></div>
</div>
</body>
</html>
```
FILE: styles.css
```css
* { box-sizing: border-box; }

html, body { height: 100%; margin: 0; }

body {
  display: flex;
  flex-direction: column;
  position: relative;
  overflow: hidden;
  padding: 0 3px;
  border: 1px solid #a0a0a0;
  background: #fff;
  color: #1e1e1e;
  font: 11px/16px "Noto Sans", "Noto Sans CJK SC", sans-serif;
}

button {
  margin: 0;
  padding: 0;
  border: 0;
  background: none;
  color: inherit;
  font: inherit;
}

button svg, label svg, td svg, .node svg, .status svg { display: block; flex: none; }
h1, h2, p { margin: 0; font: inherit; }
.defs { position: absolute; width: 0; height: 0; }

.caret {
  display: block;
  width: 7px;
  height: 4px;
  background: #1e1e1e;
  clip-path: polygon(0 0, 100% 0, 50% 100%);
}
.caret.up { background: #aaa; clip-path: polygon(0 100%, 100% 100%, 50% 0); }
.caret.wide { width: 9px; height: 5px; }
.caret.barred {
  height: 7px;
  clip-path: polygon(0 0, 100% 0, 100% 15%, 0 15%, 0 45%, 100% 45%, 50% 100%, 0 45%);
}

.sep { width: 1px; height: 24px; margin: 0 2px; background: #d0d0d0; flex: none; }

/* title bar */
.titlebar { display: flex; align-items: center; height: 33px; padding: 2px 1px 0 0; flex: none; }
.quick { display: flex; align-items: center; gap: 1px; padding-left: 3px; }
.nx { width: 35px; color: #8c9cab; font-size: 22px; font-weight: 700; line-height: 24px; }
.q { display: grid; place-items: center; width: 22px; height: 24px; }
.q.drop { width: 11px; }
.doc { flex: 1; text-align: center; font-size: 12px; }
.brand { margin-right: 19px; padding-top: 2px; color: #099; font-size: 13px; font-weight: 800; }
.win { display: flex; }
.win button { display: grid; place-items: center; width: 24px; height: 24px; }
.win.small button { width: 22px; }

/* tab strip */
.tabs { display: flex; align-items: center; height: 28px; background: #dcdcdc; flex: none; }
.tab { width: 52px; height: 28px; font-size: 13px; }
.tab.file { width: 81px; margin-right: 2px; background: #55a0b9; color: #fff; }
.tab.on { border-top: 1px solid #a0a0a0; background: #fff; color: #00648a; }
.search {
  display: flex;
  align-items: center;
  width: 125px;
  height: 20px;
  margin-left: auto;
  padding-right: 1px;
  border: 1px solid #a0a0a0;
  background: #fff;
}
.search input { flex: 1; min-width: 0; padding: 0 1px; border: 0; outline: 0; background: none; font: inherit; }
.search input::placeholder { color: #a8a8a8; opacity: 1; }
.tabtools { display: flex; padding-left: 8px; }
.tabtools button { display: grid; place-items: center; width: 24px; height: 24px; }
.win.small { padding-right: 4px; }

/* ribbon */
.ribbon { display: flex; height: 94px; border-bottom: 1px solid #d6d6d6; flex: none; }
.group {
  display: flex;
  flex-direction: column;
  justify-content: space-between;
  background: linear-gradient(#d6d6d6, #d6d6d6) 100% 5px / 1px 83px no-repeat;
}
.g1 { width: 216px; }
.g2 { width: 732px; }
.g3 { width: 301px; }
.g4 { width: 61px; }
.items { display: flex; align-items: flex-start; padding-top: 2px; }
.g1 .items { padding-left: 2px; }
.g2 .items { padding-left: 7px; }
.g3 .items { padding-left: 7px; }
.g4 .items { padding-left: 4px; }
.group footer { display: flex; align-items: center; height: 18px; color: #00648a; text-align: center; }
.group footer span { flex: 1; }
.more { display: grid; place-items: center; width: 22px; height: 16px; color: #1e1e1e; }
.more.end { align-self: flex-end; margin-left: auto; margin-bottom: 1px; width: 18px; }

.big, .tool { display: flex; flex-direction: column; align-items: center; width: 53px; white-space: nowrap; }
.tool { width: 41px; }
.big .caret { margin-top: 4px; }
.big:disabled { color: #c4c4c4; }
.ic { display: grid; place-items: center; width: 100%; height: 39px; }
.ic svg { overflow: visible; }
.g3 .lit { width: 74px; }
.g3 .lit .ic { border: 1px solid #acd4de; background: #cce5ea; }
.rmark { font: 700 10px "Liberation Sans", sans-serif; fill: #d03038; }

.stack { display: flex; flex-direction: column; width: 98px; margin: 4px 4px 0 0; }
.stack .pick { margin-bottom: 3px; }
.line { display: flex; align-items: center; gap: 4px; height: 22px; white-space: nowrap; text-align: left; }
.after { margin-left: 5px; }

.pick { display: grid; align-items: center; height: 20px; border: 1px solid #a0a0a0; }
.pick select, .pick .caret { grid-area: 1 / 1; }
.pick select {
  appearance: none;
  width: 100%;
  height: 18px;
  padding: 0 2px;
  border: 0;
  background: #fff;
  color: inherit;
  font: inherit;
}
.pick .caret { justify-self: end; margin-right: 4px; pointer-events: none; }

.gallery { display: grid; height: 66px; margin: 3px 0 0 8px; padding-left: 2px; border: 1px solid #d6d6d6; grid-auto-rows: 21px; }
.two { width: 186px; grid-template-columns: 93px 1fr; }
.one { width: 126px; }
.scroll { display: grid; width: 18px; height: 66px; margin-top: 3px; grid-auto-rows: 22px; }
.scroll button { display: grid; place-items: center; }

/* selection bar */
.bar { display: flex; align-items: center; height: 32px; border-bottom: 1px solid #809090; flex: none; }
.menu { display: flex; align-items: center; gap: 4px; width: 80px; padding-left: 10px; white-space: nowrap; }
.bar .sep.tall { margin: 0 6px; }
.f1 { width: 133px; margin-left: 6px; }
.f2 { width: 140px; margin-left: 8px; margin-right: 6px; }
.set { display: flex; align-items: center; }
.set button { display: grid; place-items: center; width: 23px; height: 22px; margin: 0 1px; border: 1px solid transparent; }
.set.narrow button { width: 24px; margin: 0; }
.set.narrow + .set { padding-left: 1px; }
.set .lit { border-color: #acd4de; background: #cce5ea; }
.set button.drop, .set.narrow button.drop { width: 12px; margin: 0; }
.set .drop .caret { width: 6px; }

/* work area */
.work { display: flex; flex: 1; min-height: 0; }
.rail { display: flex; flex-direction: column; width: 32px; background: #dcdcdc; border-right: 1px solid #a0a0a0; flex: none; }
.rail button { display: grid; place-items: center; height: 41px; padding-left: 4px; }
.rail .gear { height: 26px; margin-bottom: 17px; padding: 0 1px 0 0; }
.rail .on { height: 45px; margin: 0 -1px 0 2px; padding-left: 1px; border: 1px solid #a0a0a0; border-right: 0; background: #fff; }
.rail .gap { margin-top: 12px; }

.panel { display: flex; flex-direction: column; width: 332px; padding: 0 9px 6px 6px; border-right: 1px solid #809090; font-size: 12px; flex: none; }
.ptitle { display: flex; align-items: center; justify-content: space-between; height: 28px; padding: 1px 6px 0 4px; flex: none; }
.box { display: flex; flex-direction: column; flex: 1; min-height: 0; padding: 1px; border: 1px solid #d2d2d2; }
.grid {
  flex: 1;
  min-height: 0;
  overflow: hidden;
  background:
    linear-gradient(#e4e4e4, #e4e4e4) 199px 0 / 1px 100% no-repeat,
    linear-gradient(#e4e4e4, #e4e4e4) 299px 0 / 1px 100% no-repeat,
    linear-gradient(#fff 0 19px, #e6e6e6 19px 20px, #fafafa 20px 39px, #e6e6e6 39px 40px) 0 21px / 100% 40px;
}
table { width: 100%; table-layout: fixed; border-collapse: separate; border-spacing: 0; }
th { height: 21px; padding: 0 0 0 6px; background: #f0f0f0; border-right: 1px solid #cdcdcd; border-bottom: 1px solid #cdcdcd; font-weight: 400; text-align: left; overflow: hidden; white-space: nowrap; }
.c1 { width: 200px; }
.c2 { width: 100px; }
.c3 { border-right: 0; }
.sort { margin: 0 0 2px 18px; }
td { height: 20px; padding: 0 0 0 6px; background: #fff; border-right: 1px solid #e6e6e6; border-bottom: 1px solid #e6e6e6; }
td:first-child { padding: 0; }
td:last-child { border-right: 0; }
tr:nth-child(even) td { background: #fafafa; }
.node { display: flex; align-items: center; height: 19px; overflow: hidden; white-space: nowrap; }
.node span, .node strong { padding-left: 3px; }
.tk { margin-left: 2px; }
.dim { color: #a0a0a0; }
.guide { stroke: #909090; stroke-dasharray: 1 1; fill: none; }
.pm { fill: #fff; stroke: #c0c0c0; }
.pl { stroke: #222; }
.cb { display: grid; margin: 0 1px 0 2px; }
.cb input, .cb svg { grid-area: 1 / 1; }
.cb input { appearance: none; width: 12px; height: 12px; margin: 0; border: 1px solid #000; background: #fff; }
.hbar { display: flex; height: 16px; background: #f0f0f0; flex: none; }
.hbar button { display: grid; place-items: center; width: 17px; }
.track { flex: 1; display: flex; }
.thumb { width: 78%; background: #cdcdcd; }
.split { height: 5px; margin-top: 1px; border: 1px solid #a0a0a0; background: #dcdcdc; flex: none; }
.fold { display: flex; align-items: center; justify-content: space-between; height: 24px; padding: 4px 6px 0 7px; border-bottom: 2px solid #cdcdcd; color: #00648a; font-size: 14px; flex: none; }

/* graphics window */
.view { position: relative; flex: 1; min-width: 0; overflow: hidden; background: #d2d3d7; }
.scene { position: absolute; inset: 0; width: 100%; height: 100%; }
.lbl text { font: 12px "Noto Sans", sans-serif; }
.note {
  position: absolute;
  left: 40px;
  top: 436px;
  color: #000;
  font: 300 29px/36px "Liberation Sans", "Noto Sans CJK SC", sans-serif;
}

/* status line */
.status { display: flex; align-items: center; gap: 4px; height: 22px; padding: 0 55px 0 3px; border-top: 1px solid #a0a0a0; font-weight: 700; flex: none; }
.status span:first-child { width: 48%; }
.status .picked { flex: 1; }
body::after { content: ""; height: 7px; margin: 0 -3px; border-top: 1px solid #a0a0a0; background: #55a0b9; flex: none; }

/* site mark over the lower right corner */
.mark { position: absolute; right: 22px; bottom: 12px; display: flex; gap: 7px; pointer-events: none; }
.mark svg { opacity: .95; }
.mark div { display: flex; flex-direction: column; color: #fff; opacity: .5; }
.mark b { display: flex; align-items: baseline; gap: 3px; font: 700 38px/56px "Liberation Sans", "Noto Sans CJK SC", sans-serif; }
.mark b span { font-size: 46px; }
.mark small { font: 19px/22px "DejaVu Sans", sans-serif; }
```
